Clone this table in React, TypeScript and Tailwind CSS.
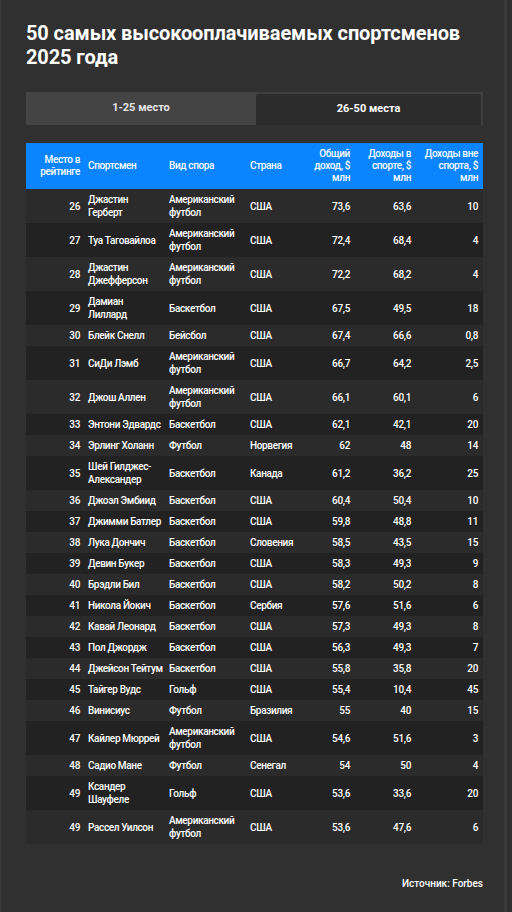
type Row = {
  rank: string;
  name: string[];
  sport: string[];
  country: string;
  total: string;
  sportIncome: string;
  other: string;
};

const AF = ["Американский", "футбол"];

const rows: Row[] = [
  { rank: "26", name: ["Джастин", "Герберт"], sport: AF, country: "США", total: "73,6", sportIncome: "63,6", other: "10" },
  { rank: "27", name: ["Туа Таговайлоа"], sport: AF, country: "США", total: "72,4", sportIncome: "68,4", other: "4" },
  { rank: "28", name: ["Джастин", "Джефферсон"], sport: AF, country: "США", total: "72,2", sportIncome: "68,2", other: "4" },
  { rank: "29", name: ["Дамиан", "Лиллард"], sport: ["Баскетбол"], country: "США", total: "67,5", sportIncome: "49,5", other: "18" },
  { rank: "30", name: ["Блейк Снелл"], sport: ["Бейсбол"], country: "США", total: "67,4", sportIncome: "66,6", other: "0,8" },
  { rank: "31", name: ["СиДи Лэмб"], sport: AF, country: "США", total: "66,7", sportIncome: "64,2", other: "2,5" },
  { rank: "32", name: ["Джош Аллен"], sport: AF, country: "США", total: "66,1", sportIncome: "60,1", other: "6" },
  { rank: "33", name: ["Энтони Эдвардс"], sport: ["Баскетбол"], country: "США", total: "62,1", sportIncome: "42,1", other: "20" },
  { rank: "34", name: ["Эрлинг Холанн"], sport: ["Футбол"], country: "Норвегия", total: "62", sportIncome: "48", other: "14" },
  { rank: "35", name: ["Шей Гилджес-", "Александер"], sport: ["Баскетбол"], country: "Канада", total: "61,2", sportIncome: "36,2", other: "25" },
  { rank: "36", name: ["Джоэл Эмбиид"], sport: ["Баскетбол"], country: "США", total: "60,4", sportIncome: "50,4", other: "10" },
  { rank: "37", name: ["Джимми Батлер"], sport: ["Баскетбол"], country: "США", total: "59,8", sportIncome: "48,8", other: "11" },
  { rank: "38", name: ["Лука Дончич"], sport: ["Баскетбол"], country: "Словения", total: "58,5", sportIncome: "43,5", other: "15" },
  { rank: "39", name: ["Девин Букер"], sport: ["Баскетбол"], country: "США", total: "58,3", sportIncome: "49,3", other: "9" },
  { rank: "40", name: ["Брэдли Бил"], sport: ["Баскетбол"], country: "США", total: "58,2", sportIncome: "50,2", other: "8" },
  { rank: "41", name: ["Никола Йокич"], sport: ["Баскетбол"], country: "Сербия", total: "57,6", sportIncome: "51,6", other: "6" },
  { rank: "42", name: ["Кавай Леонард"], sport: ["Баскетбол"], country: "США", total: "57,3", sportIncome: "49,3", other: "8" },
  { rank: "43", name: ["Пол Джордж"], sport: ["Баскетбол"], country: "США", total: "56,3", sportIncome: "49,3", other: "7" },
  { rank: "44", name: ["Джейсон Тейтум"], sport: ["Баскетбол"], country: "США", total: "55,8", sportIncome: "35,8", other: "20" },
  { rank: "45", name: ["Тайгер Вудс"], sport: ["Гольф"], country: "США", total: "55,4", sportIncome: "10,4", other: "45" },
  { rank: "46", name: ["Винисиус"], sport: ["Футбол"], country: "Бразилия", total: "55", sportIncome: "40", other: "15" },
  { rank: "47", name: ["Кайлер Мюррей"], sport: AF, country: "США", total: "54,6", sportIncome: "51,6", other: "3" },
  { rank: "48", name: ["Садио Мане"], sport: ["Футбол"], country: "Сенегал", total: "54", sportIncome: "50", other: "4" },
  { rank: "49", name: ["Ксандер", "Шауфеле"], sport: ["Гольф"], country: "США", total: "53,6", sportIncome: "33,6", other: "20" },
  { rank: "49", name: ["Рассел Уилсон"], sport: AF, country: "США", total: "53,6", sportIncome: "47,6", other: "6" },
];

function Lines({ items }: { items: string[] }) {
  return (
    <>
      {items.map((t, i) => (
        <div key={i} className="whitespace-nowrap">
          {t}
        </div>
      ))}
    </>
  );
}

const headers: { lines: string[]; right: boolean }[] = [
  { lines: ["Место в", "рейтинге"], right: true },
  { lines: ["Спортсмен"], right: false },
  { lines: ["Вид спора"], right: false },
  { lines: ["Страна"], right: false },
  { lines: ["Общий", "доход, $", "млн"], right: true },
  { lines: ["Доходы в", "спорте, $", "млн"], right: true },
  { lines: ["Доходы вне", "спорта, $", "млн"], right: true },
];

export default function App() {
  return (
    <div
      className="min-h-[912px] w-[512px] bg-[#303030] text-white"
      style={{ fontFamily: "Roboto, 'Noto Sans', sans-serif" }}
    >
      <div className="mr-[5px] min-h-[912px] border-l border-r-[3px] border-l-[#3a3a3a] border-r-[#3b3b3b] pl-[25px] pr-[21px]">
        <h1 className="pt-[21px] text-[20px] font-bold leading-[24px] tracking-[-0.1px]">
          50 самых высокооплачиваемых спортсменов
          <br />
          2025 года
        </h1>

        <div className="mt-[23px] flex h-[33px] w-[457px] bg-[#404040] pt-[2px] pr-[2px]">
          <div className="-mt-[2px] flex w-[230px] items-center justify-center bg-[#444444] text-[11px] font-bold text-[#e6e6e6]">
            1-25 место
          </div>
          <div className="flex flex-1 items-center justify-center rounded-t-[2px] bg-[#2c2c2c] text-[11px] font-bold text-white">
            26-50 места
          </div>
        </div>

        <table className="mt-[18px] w-[457px] table-fixed border-collapse text-[10px] font-medium tracking-[-0.35px]">
          <colgroup>
            <col className="w-[58px]" />
            <col className="w-[81px]" />
            <col className="w-[81px]" />
            <col className="w-[52px]" />
            <col className="w-[56px]" />
            <col className="w-[61px]" />
            <col className="w-[68px]" />
          </colgroup>
          <thead>
            <tr className="bg-[#0a84ff]">
              {headers.map((h, i) => (
                <th
                  key={i}
                  className={`px-[4px] py-[5px] align-middle font-medium leading-[12px] ${
                    h.right ? "text-right" : "text-left"
                  } ${i === 6 ? "pr-[5px]" : ""}`}
                >
                  <Lines items={h.lines} />
                </th>
              ))}
            </tr>
          </thead>
          <tbody>
            {rows.map((r, i) => (
              <tr
                key={i}
                className={i % 2 === 0 ? "bg-[#2b2b2b]" : "bg-[#222222]"}
              >
                <td className="px-[4px] py-[4px] text-right leading-[13px]">
                  {r.rank}
                </td>
                <td className="px-[4px] py-[4px] leading-[13px]">
                  <Lines items={r.name} />
                </td>
                <td className="px-[4px] py-[4px] leading-[13px]">
                  <Lines items={r.sport} />
                </td>
                <td className="px-[4px] py-[4px] leading-[13px]">
                  {r.country}
                </td>
                <td className="px-[4px] py-[4px] text-right leading-[13px]">
                  {r.total}
                </td>
                <td className="px-[4px] py-[4px] text-right leading-[13px]">
                  {r.sportIncome}
                </td>
                <td className="py-[4px] pl-[4px] pr-[5px] text-right leading-[13px]">
                  {r.other}
                </td>
              </tr>
            ))}
          </tbody>
        </table>

        <div className="mt-[33px] text-right text-[10px] font-medium leading-[13px]">
          Источник: Forbes
        </div>
      </div>
    </div>
  );
}
